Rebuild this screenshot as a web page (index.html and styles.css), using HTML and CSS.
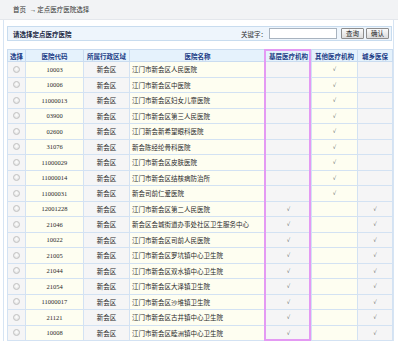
FILE: index.html
```html
<!DOCTYPE html>
<html lang="zh-CN">
<head>
  <meta charset="UTF-8">
  <title>定点医疗医院选择</title>
  <link rel="stylesheet" href="styles.css">
</head>
<body>
  <div class="crumb">首页 <span class="arrow">→</span>定点医疗医院选择</div>

  <div class="panel">
    <div class="panel-head">
      <span class="panel-title">请选择定点医疗医院</span>
      <div class="search">
        <label>关键字：</label>
        <input type="text" class="kw">
        <button class="btn">查询</button>
        <button class="btn">确认</button>
      </div>
    </div>

    <div class="grid-wrap">
      <table class="grid">
        <colgroup>
          <col class="c-sel"><col class="c-code"><col class="c-area"><col class="c-name">
          <col class="c-base"><col class="c-other"><col class="c-ins">
        </colgroup>
        <thead>
          <tr>
            <th>选择</th><th>医院代码</th><th>所属行政区域</th><th>医院名称</th>
            <th>基层医疗机构</th><th>其他医疗机构</th><th>城乡医保</th>
          </tr>
        </thead>
        <tbody>
          <tr><td><input type="radio" name="h"></td><td>10003</td><td>新会区</td><td class="name">江门市新会区人民医院</td><td></td><td>√</td><td></td></tr>
          <tr><td><input type="radio" name="h"></td><td>10006</td><td>新会区</td><td class="name">江门市新会区中医院</td><td></td><td>√</td><td></td></tr>
          <tr><td><input type="radio" name="h"></td><td>11000013</td><td>新会区</td><td class="name">江门市新会区妇女儿童医院</td><td></td><td>√</td><td></td></tr>
          <tr><td><input type="radio" name="h"></td><td>03900</td><td>新会区</td><td class="name">江门市新会区第三人民医院</td><td></td><td>√</td><td></td></tr>
          <tr><td><input type="radio" name="h"></td><td>02600</td><td>新会区</td><td class="name">江门新会新希望眼科医院</td><td></td><td>√</td><td></td></tr>
          <tr><td><input type="radio" name="h"></td><td>31076</td><td>新会区</td><td class="name">新会陈经纶骨科医院</td><td></td><td>√</td><td></td></tr>
          <tr><td><input type="radio" name="h"></td><td>11000029</td><td>新会区</td><td class="name">江门市新会区皮肤医院</td><td></td><td>√</td><td></td></tr>
          <tr><td><input type="radio" name="h"></td><td>11000014</td><td>新会区</td><td class="name">江门市新会区结核病防治所</td><td></td><td>√</td><td></td></tr>
          <tr><td><input type="radio" name="h"></td><td>11000031</td><td>新会区</td><td class="name">新会司前仁爱医院</td><td></td><td>√</td><td></td></tr>
          <tr><td><input type="radio" name="h"></td><td>12001228</td><td>新会区</td><td class="name">江门市新会区第二人民医院</td><td>√</td><td></td><td>√</td></tr>
          <tr><td><input type="radio" name="h"></td><td>21046</td><td>新会区</td><td class="name">新会区会城街道办事处社区卫生服务中心</td><td>√</td><td></td><td>√</td></tr>
          <tr><td><input type="radio" name="h"></td><td>10022</td><td>新会区</td><td class="name">江门市新会区司前人民医院</td><td>√</td><td></td><td>√</td></tr>
          <tr><td><input type="radio" name="h"></td><td>21005</td><td>新会区</td><td class="name">江门市新会区罗坑镇中心卫生院</td><td>√</td><td></td><td>√</td></tr>
          <tr><td><input type="radio" name="h"></td><td>21044</td><td>新会区</td><td class="name">江门市新会区双水镇中心卫生院</td><td>√</td><td></td><td>√</td></tr>
          <tr><td><input type="radio" name="h"></td><td>21054</td><td>新会区</td><td class="name">江门市新会区大泽镇卫生院</td><td>√</td><td></td><td>√</td></tr>
          <tr><td><input type="radio" name="h"></td><td>11000017</td><td>新会区</td><td class="name">江门市新会区沙堆镇卫生院</td><td>√</td><td></td><td>√</td></tr>
          <tr><td><input type="radio" name="h"></td><td>21121</td><td>新会区</td><td class="name">江门市新会区古井镇中心卫生院</td><td>√</td><td></td><td>√</td></tr>
          <tr><td><input type="radio" name="h"></td><td>10008</td><td>新会区</td><td class="name">江门市新会区睦洲镇中心卫生院</td><td>√</td><td></td><td>√</td></tr>
        </tbody>
      </table>
      <!-- highlight box over the 基层医疗机构 column -->
      <div class="mark"></div>
    </div>
  </div>
</body>
</html>
```

FILE: styles.css
```css
* {
  box-sizing: border-box;
}

body {
  margin: 0;
  background: #fff;
  font-family: "Liberation Serif", "Noto Sans CJK SC", serif;
  font-size: 6.5px;
  color: #222;
}

.crumb {
  height: 20px;
  line-height: 20px;
  padding-left: 13px;
  background: #f2f3f5;
  border-bottom: 1px solid #e4e7ec;
  color: #333;
}

.crumb .arrow {
  margin: 0 1px 0 2px;
}

.panel {
  margin: 0 4px 0 3px;
  padding: 6px 1px 0 3px;
  border-left: 1px solid #d6e4f3;
  border-right: 1px solid #d6e4f3;
}

.panel-head {
  display: flex;
  align-items: center;
  justify-content: space-between;
  height: 15px;
  padding: 0 2px 0 5px;
  background: #eef5fc;
  border: 1px solid #c8dcef;
  margin-bottom: 8px;
}

.panel-title {
  font-weight: bold;
  color: #1d2a44;
}

.search {
  display: flex;
  align-items: center;
}

.search label {
  margin-right: 2px;
  color: #333;
}

.kw {
  width: 68px;
  height: 11px;
  margin: 0 2px 0 0;
  padding: 0;
  border: 1px solid #a8b3bf;
  background: #fff;
}

.btn {
  width: 23px;
  height: 11px;
  margin: 0 0 0 2px;
  padding: 0;
  font: inherit;
  line-height: 9px;
  color: #222;
  background: linear-gradient(#fbfbfb, #dcdcdc);
  border: 1px solid #8d8d8d;
  border-radius: 1px;
}

.grid-wrap {
  position: relative;
}

.grid {
  width: 385px;
  border-collapse: collapse;
  table-layout: fixed;
}

.c-sel { width: 18px; }
.c-code { width: 58px; }
.c-area { width: 46px; }
.c-name { width: 136px; }
.c-base { width: 46px; }
.c-other { width: 46px; }
.c-ins { width: 35px; }

.grid th {
  height: 12px;
  padding: 0;
  background: #e5f2fc;
  border: 1px solid #cadcf0;
  color: #1b3c86;
  font-weight: bold;
  text-align: center;
  white-space: nowrap;
}

.grid td {
  height: 15.5px;
  padding: 0;
  border: 1px solid #d3e2f3;
  text-align: center;
  white-space: nowrap;
  overflow: hidden;
  color: #2a2a2a;
}

.grid td:nth-child(odd) {
  background: #f5f5f6;
}

.grid td:nth-child(even) {
  background: #fefef1;
}

.grid td.name {
  text-align: left;
  padding-left: 2px;
}

.grid td:nth-child(5), .grid td:nth-child(6), .grid td:nth-child(7) {
  font-family: "DejaVu Sans", sans-serif;
  font-size: 5.5px;
  color: #555;
}

.grid input[type=radio] {
  appearance: none;
  display: block;
  width: 7px;
  height: 7px;
  margin: 0 auto;
  border: 1px solid #c2c2c2;
  border-radius: 50%;
  background: radial-gradient(circle at 50% 40%, #fff, #dcdcdc);
}

.mark {
  position: absolute;
  top: 0;
  bottom: 0;
  left: 257px;
  width: 47px;
  border: 2px solid #e49af3;
  pointer-events: none;
}
```
